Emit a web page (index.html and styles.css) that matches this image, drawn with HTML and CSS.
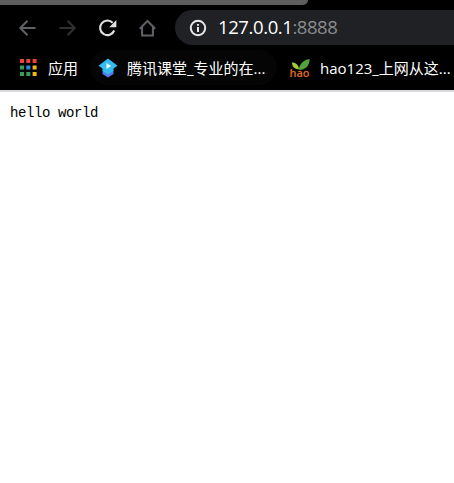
FILE: index.html
```html
<!DOCTYPE html>
<html lang="zh-CN">
<head>
<meta charset="utf-8">
<title>127.0.0.1:8888</title>
<link rel="stylesheet" href="styles.css">
</head>
<body>
<header class="browser">
  <div class="tab-edge"></div>
  <nav class="toolbar">
    <svg class="nav-icon back" viewBox="0 0 20 20"><path d="M18.5 10H3.5M10.5 2.8L3.3 10L10.5 17.2"/></svg>
    <svg class="nav-icon forward" viewBox="0 0 20 20"><path d="M2.5 10H17.5M10.5 2.8L17.7 10L10.5 17.2"/></svg>
    <svg class="nav-icon reload" viewBox="0 0 20 20"><path d="M15.7 4.8A7.3 7.3 0 1 0 17.2 12.5"/><path class="solid" d="M19.4 2V9.2H12.2Z"/></svg>
    <svg class="nav-icon home" viewBox="0 0 20 20"><path d="M2.8 10.7L10.5 3L18.2 10.7M5.1 9V17.4H15.9V9"/></svg>
    <div class="address">
      <svg class="info" viewBox="0 0 18 18"><circle cx="9" cy="9" r="7.2"/><path d="M9 8V13M9 5V6.8"/></svg>
      <span class="host">127.0.0.1</span><span class="port">:8888</span>
    </div>
  </nav>
  <nav class="bookmarks">
    <div class="bookmark apps">
      <svg class="apps-icon" viewBox="0 0 17 17">
        <path fill="#e8453c" d="M0 0h4v4H0zM6.3 0h4v4h-4zM12.6 0h4v4h-4z"/>
        <path fill="#34a053" d="M0 6.5h4v4H0zM0 13h4v4H0zM6.3 13h4v4h-4z"/>
        <path fill="#2586ee" d="M6.3 6.5h4v4h-4z"/>
        <path fill="#f7b21c" d="M12.6 6.5h4v4h-4zM12.6 13h4v4h-4z"/>
      </svg>
      <span>应用</span>
    </div>
    <div class="bookmark classroom">
      <svg class="class-icon" viewBox="0 0 20 20">
        <path fill="#5878ef" d="M4.5 12.5L10 16L15.5 12.5V16L10 19.5L4.5 16Z"/>
        <path fill="#32bdf2" d="M10 .5L19.5 7.8L15.5 10.5V13L10 16.5L4.5 13V10.5L.5 7.8Z"/>
        <path fill="#fff" d="M8.5 5L13 8L8.5 11Z"/>
      </svg>
      <span>腾讯课堂_专业的在...</span>
    </div>
    <div class="bookmark hao">
      <svg class="hao-icon" viewBox="0 0 22 20">
        <path fill="#a6c936" d="M3 4.5C7 4.5 9.5 7 10 11C6 11.5 3 9 3 4.5Z"/>
        <path fill="#51a33a" d="M20.5 1C21 7 17 12 9.5 12C10.5 6.5 14 2 20.5 1Z"/>
        <text x=".5" y="18.5" textLength="20" lengthAdjust="spacingAndGlyphs">hao</text>
      </svg>
      <span>hao123_上网从这...</span>
    </div>
  </nav>
</header>
<main><pre>hello world</pre></main>
</body>
</html>
```
FILE: styles.css
```css
* { box-sizing: border-box; }
body { margin: 0; background: #fff; overflow: hidden; }
svg { display: block; flex: none; }
.browser { height: 92px; background: #000; border-bottom: 2px solid #dbdadf; }
.tab-edge { width: 308px; height: 5px; background: #5e5e5e; border-bottom-right-radius: 5px; }
.toolbar { display: flex; align-items: center; height: 45px; padding-left: 17px; gap: 20px; }
.nav-icon { width: 20px; height: 20px; fill: none; stroke: #5f6368; stroke-width: 2; }
.forward { stroke: #303133; }
.reload { stroke: #e1e1e1; stroke-width: 2.1; }
.reload .solid { fill: #e1e1e1; stroke: none; }
.address { display: flex; align-items: center; flex: 1; height: 35px; margin-left: -2px; padding-left: 14px; border-radius: 18px 0 0 18px; background: #202124; font: 18.5px/33px "Open Sans", sans-serif; white-space: nowrap; }
.address span { padding-bottom: 2px; }
.info { width: 18px; height: 18px; margin-right: 11px; fill: none; stroke: #e8e8e8; stroke-width: 2; }
.host { color: #fff; letter-spacing: -.4px; }
.port { color: #898b8e; letter-spacing: -.45px; }
.bookmarks { display: flex; align-items: center; height: 35px; font: 15px/20px "Open Sans", "Noto Sans CJK SC", sans-serif; color: #fff; white-space: nowrap; }
.bookmark { display: flex; align-items: center; height: 35px; flex: none; }
.apps { width: 90px; padding-left: 20px; gap: 11px; }
.apps-icon { width: 17px; height: 17px; }
.classroom { width: 187px; padding-left: 8px; gap: 9px; border-radius: 18px; background: #050505; }
.class-icon { width: 20px; height: 20px; }
.hao { padding-left: 12px; gap: 9px; }
.hao-icon { width: 22px; height: 20px; }
.hao-icon text { font: 600 11.5px "Open Sans", sans-serif; fill: #e76d24; }
main { padding: 13px 10px; }
pre { margin: 0; font: 14px/16px "Liberation Mono", monospace; letter-spacing: -.4px; color: #000; }
```
